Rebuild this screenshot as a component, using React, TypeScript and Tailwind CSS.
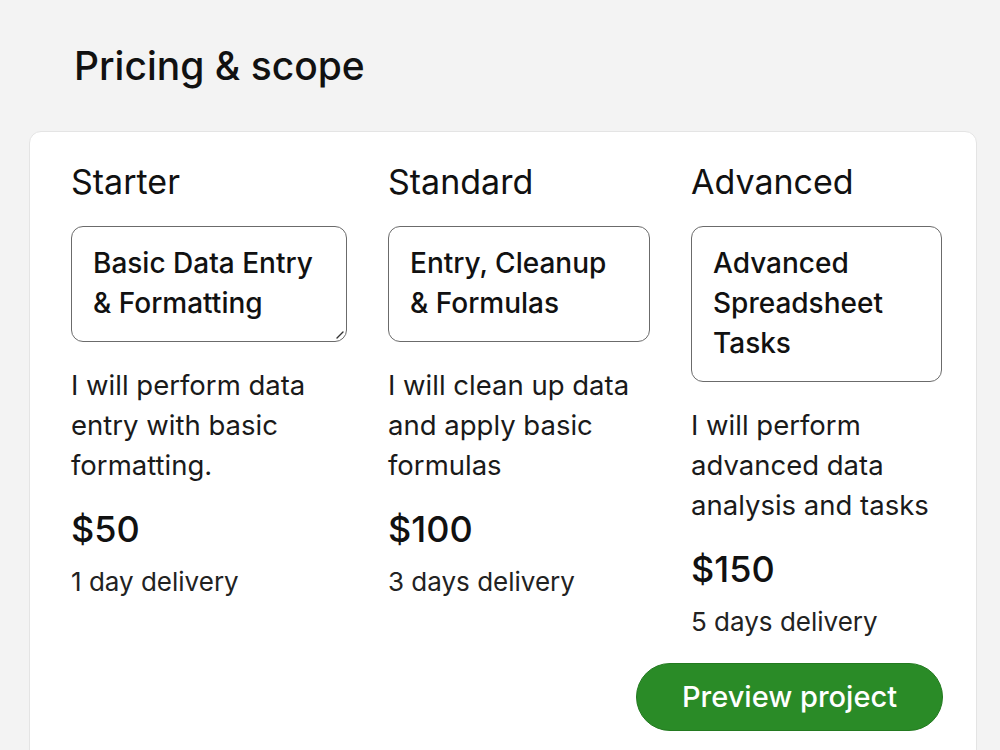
import React from 'react';

type Tier = {
  name: string;
  title: string[];
  blurb: string;
  price: string;
  delivery: string;
  width: string;
  resizable?: boolean;
};

const tiers: Tier[] = [
  {
    name: 'Starter',
    title: ['Basic Data Entry', '& Formatting'],
    blurb: 'I will perform data entry with basic formatting.',
    price: '$50',
    delivery: '1 day delivery',
    width: 'w-[276px]',
    resizable: true,
  },
  {
    name: 'Standard',
    title: ['Entry, Cleanup', '& Formulas'],
    blurb: 'I will clean up data and apply basic formulas',
    price: '$100',
    delivery: '3 days delivery',
    width: 'w-[262px]',
  },
  {
    name: 'Advanced',
    title: ['Advanced', 'Spreadsheet', 'Tasks'],
    blurb: 'I will perform advanced data analysis and tasks',
    price: '$150',
    delivery: '5 days delivery',
    width: 'w-[251px]',
  },
];

const TierColumn = ({ tier }: { tier: Tier }) => (
  <div className={`${tier.width} shrink-0 flex flex-col`}>
    <h3 className="text-[34px] leading-[40px] text-[#111]">{tier.name}</h3>
    <div className="relative mt-[24px] rounded-[12px] border border-[#6b6b6b] pl-[21px] pr-[12px] pt-[16px] pb-[18px]">
      <p className="text-[28px] leading-[40px] font-medium text-[#111]">
        {tier.title.map((line) => (
          <span key={line} className="block whitespace-nowrap">
            {line}
          </span>
        ))}
      </p>
      {tier.resizable && (
        <svg className="absolute right-[2px] bottom-[2px]" width="8" height="8" viewBox="0 0 8 8">
          <path d="M1 7 L7 1" stroke="#333" strokeWidth="1.4" strokeLinecap="round" />
        </svg>
      )}
    </div>
    <p className="mt-[23px] text-[27.5px] leading-[40px] text-[#1a1a1a]">{tier.blurb}</p>
    <div className="mt-[22px] text-[36px] leading-[44px] font-medium text-[#111]">{tier.price}</div>
    <div className="mt-[14px] text-[26px] leading-[34px] text-[#222]">{tier.delivery}</div>
  </div>
);

export default function App() {
  return (
    <div className="min-h-screen bg-[#f3f3f3] font-['Inter',sans-serif] overflow-hidden">
      <h1 className="pl-[74px] pt-[42px] text-[39px] leading-[48px] font-medium text-[#111]">
        Pricing &amp; scope
      </h1>
      <div className="ml-[29px] mr-[23px] mt-[41px] rounded-[12px] border border-[#e4e4e4] bg-white pl-[41px] pr-[33px] pt-[30px] pb-[30px]">
        <div className="flex gap-[41px]">
          {tiers.map((t) => (
            <TierColumn key={t.name} tier={t} />
          ))}
        </div>
        <div className="flex justify-end mt-[24px]">
          <button className="w-[307px] h-[68px] rounded-full bg-[#2a8b27] border border-[#237a20] text-white text-[29px] font-medium">
            Preview project
          </button>
        </div>
      </div>
    </div>
  );
}
